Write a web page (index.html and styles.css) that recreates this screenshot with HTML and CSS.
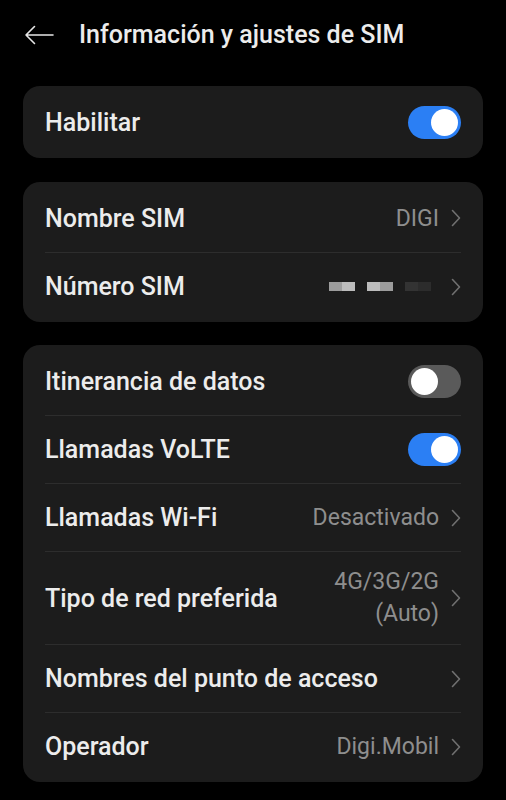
FILE: index.html
```html
<!DOCTYPE html>
<html lang="es">
<head>
<meta charset="utf-8">
<link rel="stylesheet" href="styles.css">
</head>
<body>
<header class="topbar">
  <svg class="back" width="30" height="20" viewBox="0 0 30 20"><path d="M2 10H29M10.5 1.5L2 10l8.5 8.5" fill="none" stroke="#e6e6e6" stroke-width="1.6" stroke-linecap="round" stroke-linejoin="round"/></svg>
  <h1 class="title">Información y ajustes de SIM</h1>
</header>
<main class="content">
  <section class="card">
    <div class="row"><span class="label">Habilitar</span><span class="toggle on"><span class="knob"></span></span></div>
  </section>
  <section class="card">
    <div class="row"><span class="label">Nombre SIM</span><span class="end"><span class="value">DIGI</span><svg class="chev" width="10" height="18" viewBox="0 0 10 18"><path d="M1.5 1.5L8.5 9l-7 7.5" fill="none" stroke="#707070" stroke-width="1.6" stroke-linecap="round" stroke-linejoin="round"/></svg></span></div>
    <div class="row"><span class="label">Número SIM</span><span class="end"><span class="blur"><i class="px a"></i><i class="px b"></i><i class="sp"></i><i class="px b"></i><i class="px a"></i><i class="sp"></i><i class="px c"></i><i class="px d"></i></span><svg class="chev" width="10" height="18" viewBox="0 0 10 18"><path d="M1.5 1.5L8.5 9l-7 7.5" fill="none" stroke="#707070" stroke-width="1.6" stroke-linecap="round" stroke-linejoin="round"/></svg></span></div>
  </section>
  <section class="card">
    <div class="row"><span class="label">Itinerancia de datos</span><span class="toggle"><span class="knob"></span></span></div>
    <div class="row"><span class="label">Llamadas VoLTE</span><span class="toggle on"><span class="knob"></span></span></div>
    <div class="row"><span class="label">Llamadas Wi-Fi</span><span class="end"><span class="value">Desactivado</span><svg class="chev" width="10" height="18" viewBox="0 0 10 18"><path d="M1.5 1.5L8.5 9l-7 7.5" fill="none" stroke="#707070" stroke-width="1.6" stroke-linecap="round" stroke-linejoin="round"/></svg></span></div>
    <div class="row tall"><span class="label">Tipo de red preferida</span><span class="end"><span class="value multi">4G/3G/2G<br>(Auto)</span><svg class="chev" width="10" height="18" viewBox="0 0 10 18"><path d="M1.5 1.5L8.5 9l-7 7.5" fill="none" stroke="#707070" stroke-width="1.6" stroke-linecap="round" stroke-linejoin="round"/></svg></span></div>
    <div class="row"><span class="label">Nombres del punto de acceso</span><span class="end"><svg class="chev" width="10" height="18" viewBox="0 0 10 18"><path d="M1.5 1.5L8.5 9l-7 7.5" fill="none" stroke="#707070" stroke-width="1.6" stroke-linecap="round" stroke-linejoin="round"/></svg></span></div>
    <div class="row"><span class="label">Operador</span><span class="end"><span class="value">Digi.Mobil</span><svg class="chev" width="10" height="18" viewBox="0 0 10 18"><path d="M1.5 1.5L8.5 9l-7 7.5" fill="none" stroke="#707070" stroke-width="1.6" stroke-linecap="round" stroke-linejoin="round"/></svg></span></div>
  </section>
</main>
</body>
</html>
```
FILE: styles.css
```css
* { box-sizing: border-box; }
html, body { margin: 0; padding: 0; background: #000; }
body {
  font-family: Roboto, "Noto Sans", "Liberation Sans", sans-serif;
  color: #ececec;
  width: 506px;
  height: 800px;
  overflow: hidden;
}
.topbar {
  height: 68px;
  display: flex;
  align-items: center;
  padding-left: 24px;
  gap: 25px;
}
.back { display: block; margin-top: 1px; }
.title {
  margin: 0;
  font-size: 25px;
  font-weight: 500;
  color: #ececec;
}
.content {
  display: flex;
  flex-direction: column;
  gap: 24px;
  padding: 18px 23px 0;
}
.card {
  background: #1c1c1c;
  border-radius: 17px;
  padding: 2px 22px;
}
.card + .card + .card { margin-top: -1px; }
.row {
  height: 68px;
  display: flex;
  align-items: center;
  justify-content: space-between;
}
.row + .row { border-top: 1px solid #2d2d2d; }
.row.tall { height: 93px; }
.label {
  font-size: 25px;
  font-weight: 500;
  color: #ececec;
}
.end {
  display: flex;
  align-items: center;
  gap: 12px;
}
.value {
  font-size: 23px;
  color: #8e8e8e;
  text-align: right;
}
.value.multi { line-height: 32px; }
.chev { display: block; }
.toggle {
  width: 53px;
  height: 33px;
  border-radius: 17px;
  background: #5a5a5a;
  padding: 3px;
  display: flex;
  justify-content: flex-start;
}
.toggle.on { background: #2b7ff4; justify-content: flex-end; }
.knob {
  width: 27px;
  height: 27px;
  border-radius: 50%;
  background: #fff;
}
.blur {
  display: flex;
  align-items: center;
  margin-right: 8px;
}
.px { display: block; width: 13px; height: 9px; }
.px.a { background: #9c9c9c; }
.px.b { background: #bcbcbc; }
.px.c { background: #333; }
.px.d { background: #2c2c2c; }
.sp { display: block; width: 12px; }
```
